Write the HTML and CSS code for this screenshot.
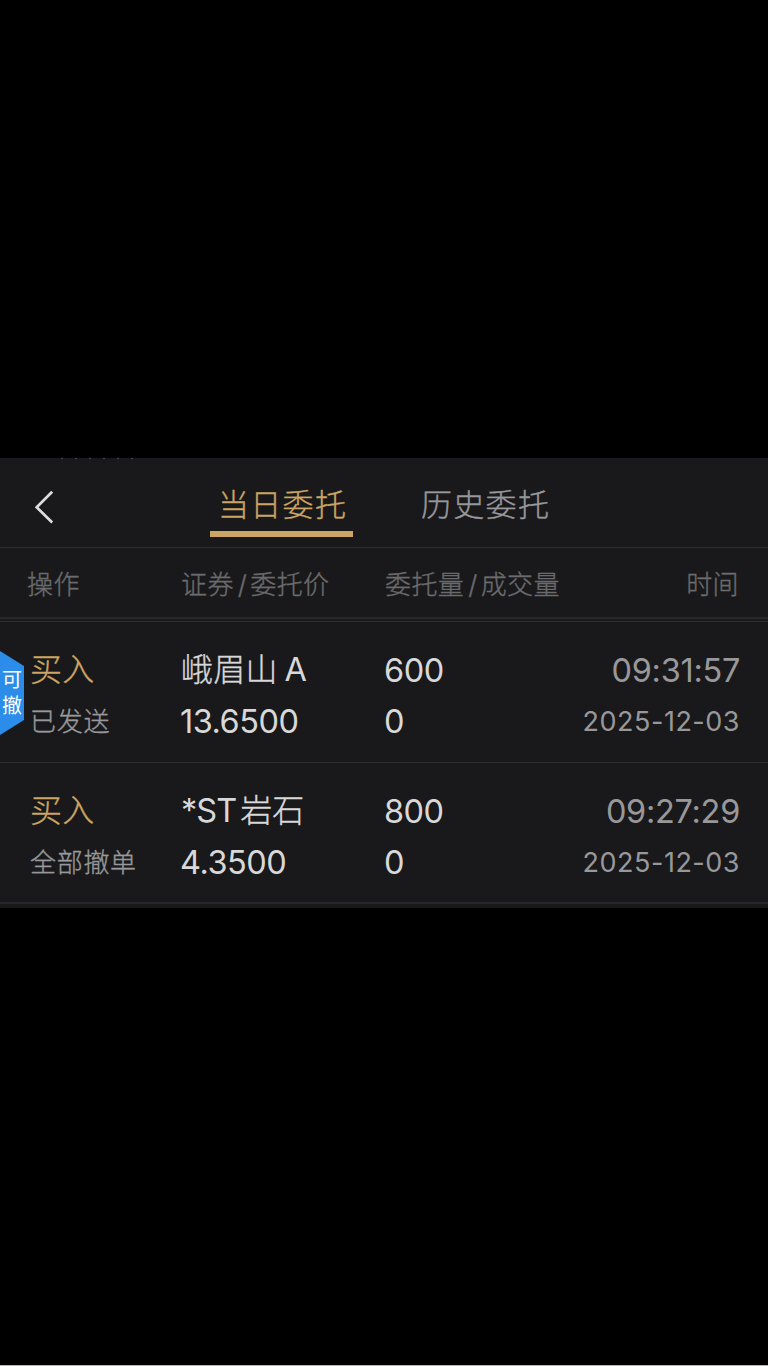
FILE: index.html
```html
<!DOCTYPE html>
<html lang="zh-CN">
<head>
  <meta charset="UTF-8" />
  <title>当日委托</title>
  <meta name="viewport" content="width=device-width, initial-scale=1.0" />
  <link rel="stylesheet" href="styles.css">
</head>
<body>
  <main class="panel">
    <div class="cut-text"><i></i><i></i><i></i><i></i><i></i><i></i></div>

    <header class="topbar">
      <button class="back" aria-label="返回">
        <svg width="20" height="34" viewBox="0 0 20 34" fill="none" stroke="#dededf" stroke-width="2.7">
          <path d="M18.2 1.8 L2.7 17.3 L18.2 32.5" />
        </svg>
      </button>
      <nav class="tabs">
        <a class="tab active">当日委托</a>
        <a class="tab">历史委托</a>
      </nav>
    </header>

    <div class="row thead">
      <span>操作</span>
      <span>证券<b class="slash">/</b>委托价</span>
      <span>委托量<b class="slash">/</b>成交量</span>
      <span class="right">时间</span>
    </div>

    <div class="row order first">
      <div class="badge"><span>可</span><span>撤</span></div>
      <div class="cell op">
        <div class="side">买入</div>
        <div class="status">已发送</div>
      </div>
      <div class="cell">
        <div class="name">峨眉山<span class="latin after">A</span></div>
        <div class="num">13.6500</div>
      </div>
      <div class="cell">
        <div class="num">600</div>
        <div class="num">0</div>
      </div>
      <div class="cell right">
        <div class="time">09:31:57</div>
        <div class="date">2025-12-03</div>
      </div>
    </div>

    <div class="row order last">
      <div class="cell op">
        <div class="side">买入</div>
        <div class="status">全部撤单</div>
      </div>
      <div class="cell">
        <div class="name"><span class="latin before">*ST</span>岩石</div>
        <div class="num">4.3500</div>
      </div>
      <div class="cell">
        <div class="num">800</div>
        <div class="num">0</div>
      </div>
      <div class="cell right">
        <div class="time">09:27:29</div>
        <div class="date">2025-12-03</div>
      </div>
    </div>
  </main>
</body>
</html>
```
FILE: styles.css
```css
:root {
  --panel: #19191b;
  --line: #2d2d2f;
  --gold: #cca563;
  --text: #d8d8d9;
  --muted: #98989a;
  --dim: #6b6b6d;
}

* {
  box-sizing: border-box;
}

html, body {
  margin: 0;
  padding: 0;
  background: #000;
}

body {
  height: 1366px;
  padding-top: 458px;
  border-bottom: 1px solid #b9b4b7;
  font-family: "Inter", "Noto Sans CJK SC", sans-serif;
  font-weight: 300;
  color: var(--text);
  overflow: hidden;
}

.panel {
  position: relative;
  height: 450px;
  background: var(--panel);
}

/* tips of the line scrolled under the top edge */
.cut-text {
  position: absolute;
  top: 0;
  left: 61px;
  display: flex;
  gap: 12px;
}

.cut-text i {
  width: 2px;
  height: 1px;
  background: #48484a;
}

.topbar {
  display: flex;
  height: 90px;
  border-bottom: 1px solid var(--line);
}

.back {
  width: 210px;
  padding: 9px 0 0 34px;
  border: 0;
  background: none;
  text-align: left;
}

.back svg {
  display: block;
}

.tabs {
  display: flex;
  gap: 60px;
}

.tab {
  width: 143px;
  height: 79px;
  padding-left: 8px;
  font-size: 31px;
  line-height: 93px;
  letter-spacing: 1.3px;
  color: var(--muted);
  white-space: nowrap;
}

.tab.active {
  color: var(--gold);
  border-bottom: 6px solid var(--gold);
}

.tab, .thead, .side, .name, .status {
  -webkit-text-stroke: 0.35px currentColor;
}

.row {
  display: grid;
  grid-template-columns: 154px 204px 180px 1fr;
  padding: 0 28px 0 27px;
  white-space: nowrap;
}

.thead {
  height: 71px;
  padding-right: 29px;
  border-bottom: 2px solid #28282a;
  font-size: 26px;
  line-height: 73px;
  letter-spacing: 0.4px;
  color: var(--dim);
}

.slash {
  margin: 0 3px 0 4px;
  font-weight: 300;
}

.right {
  text-align: right;
}

.order {
  position: relative;
  height: 141px;
  padding-top: 23px;
  border-bottom: 1px solid var(--line);
}

.order.first {
  height: 142px;
  margin-top: 2px;
  border-top: 1px solid var(--line);
}

.order.last {
  border-bottom: 2px solid #28282a;
}

.cell > div {
  height: 50px;
  line-height: 51px;
}

.cell > div:last-child {
  line-height: 53px;
}

.op {
  padding-left: 3px;
}

.side, .name {
  font-size: 32px;
  letter-spacing: 0.2px;
}

.cell > .side, .cell > .name {
  line-height: 50px;
}

.side {
  color: var(--gold);
}

.status {
  font-size: 26px;
  letter-spacing: 0.7px;
  color: var(--muted);
}

.num, .time, .latin {
  font-size: 32.5px;
  font-weight: 400;
}

.num {
  margin-left: -1px;
  letter-spacing: -0.5px;
}

.time {
  letter-spacing: -0.3px;
}

.latin {
  letter-spacing: -1px;
  -webkit-text-stroke: 0;
}

.latin.after {
  margin-left: 7px;
}

.latin.before {
  margin-right: 4px;
}

.time, .date {
  color: var(--muted);
}

.date {
  font-size: 27px;
  font-weight: 400;
  letter-spacing: 0.5px;
}

.badge {
  position: absolute;
  top: 29px;
  left: 0;
  display: flex;
  flex-direction: column;
  justify-content: center;
  width: 24px;
  height: 84px;
  padding-left: 2px;
  background: #2b8de9;
  clip-path: polygon(0 0, 100% 15px, 100% 69px, 0 100%);
  font-size: 20px;
  font-weight: 400;
  line-height: 26px;
  color: #fff;
}
```
